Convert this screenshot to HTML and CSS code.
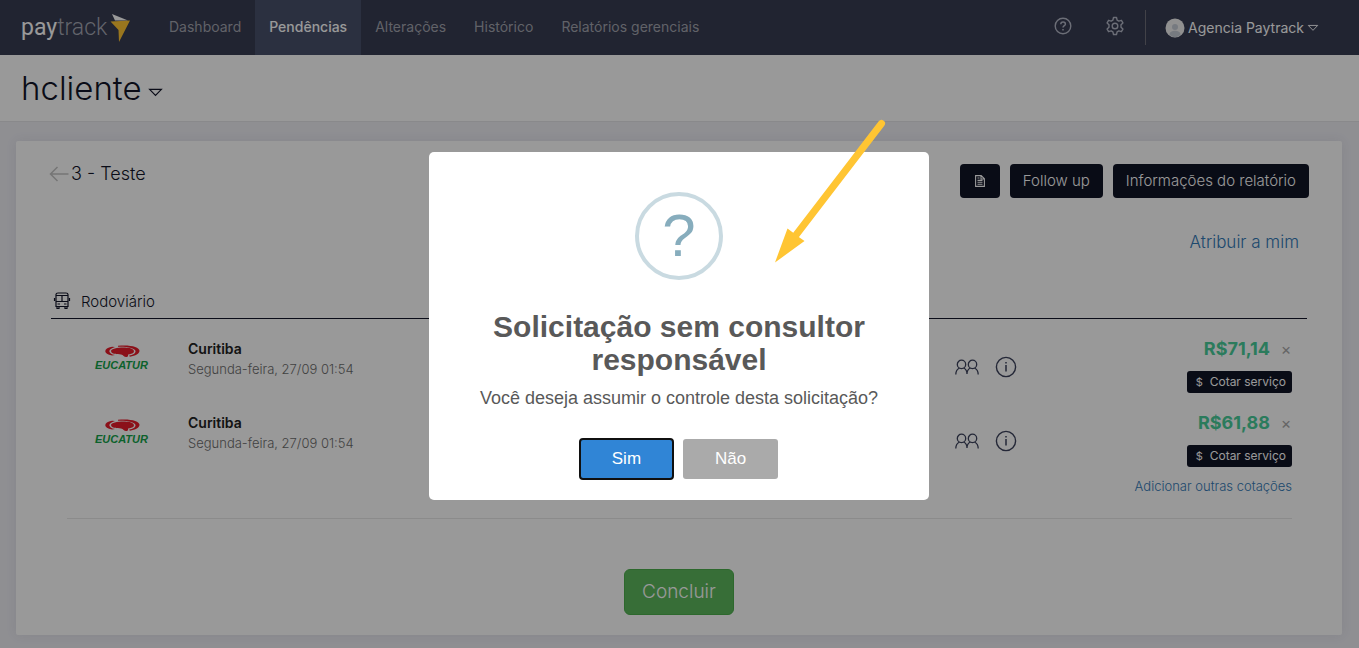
FILE: index.html
```html
<!DOCTYPE html>
<html lang="pt-BR">
<head>
<meta charset="utf-8">
<meta name="viewport" content="width=device-width, initial-scale=1">
<title>Paytrack - Pendências</title>
<link rel="stylesheet" href="styles.css">
</head>
<body>
<svg class="sprite" aria-hidden="true">
  <symbol id="people" viewBox="0 0 24 16">
    <g fill="none" stroke="currentColor" stroke-width="1.3">
      <circle cx="6.5" cy="5.4" r="4.2"/><circle cx="17.5" cy="5.4" r="4.2"/>
      <path d="M.8 15.500c0-3.500 1.500-5.500 3.700-6.500M8.500 9c2.200 1 3.500 3.200 3.500 6M12 15c0-2.800 1.300-5 3.500-6M19.500 9c2.200 1 3.700 3 3.700 6.500"/>
    </g>
  </symbol>
  <symbol id="info" viewBox="0 0 22 22">
    <circle cx="11" cy="11" r="9.600" fill="none" stroke="currentColor" stroke-width="1.400"/>
    <path d="M11 9v6.500M11 6v1.600" stroke="currentColor" stroke-width="1.500"/>
  </symbol>
  <symbol id="caret" viewBox="0 0 14 8">
    <path d="M1.500 1h11L7 6.700z" fill="none" stroke="currentColor" stroke-width="1.100"/>
  </symbol>
  <symbol id="eucatur" viewBox="0 0 58 28">
    <path d="M18 2.800C9 4.500 9 10 18 11.500l3-.4C13.500 9.300 13.500 5 21 2.900z" fill="#e81c2b"/>
    <path d="M24 1.700c12-1.200 21.500 1.100 21.500 5.100 0 3-4 5.200-9.500 5.900l-1-1c4-.7 6.500-2.300 6.500-4.400 0-3-7-4.800-17.500-4.600z" fill="#e81c2b"/>
    <path d="M17 7c0-4 20-5 22.500-1 1.500 2.600-1 4-5 4.300-1 1 .5 3-2.500 2.600-3-.4-2.500-2.200-5-2.500-4-.4-9.500.2-10-3.400z" fill="#e81c2b"/>
    <text class="eucatur-name" x="1" y="25">EUCATUR</text>
  </symbol>
</svg>

<header class="topbar">
  <a class="brand" href="#"><span>pay<span class="brand-track">track</span></span>
    <svg class="brand-mark" viewBox="0 0 21 30" aria-hidden="true"><path d="M2 1l16 6.500H5z" fill="#fff"/><path d="M.5 8.500L20 7.500 9 29 8.500 17z" fill="#ffc533"/></svg>
  </a>
  <nav class="menu">
    <a href="#">Dashboard</a>
    <a class="active" href="#">Pendências</a>
    <a href="#">Alterações</a>
    <a href="#">Histórico</a>
    <a href="#">Relatórios gerenciais</a>
  </nav>
  <div class="tools">
    <button class="icon-button" type="button" aria-label="Ajuda">
      <svg viewBox="0 0 18 18" width="18" height="18"><g fill="none" stroke="currentColor" stroke-width="1.400"><circle cx="9" cy="9" r="7.800"/><path d="M6.800 7.300c0-3 4.600-2.900 4.600-.1C11.400 8.700 9 8.700 9 10.500M9 11.900v1.500" stroke-width="1.500"/></g></svg>
    </button>
    <button class="icon-button" type="button" aria-label="Configurações">
      <svg viewBox="0 0 20 20" width="20" height="20"><g fill="none" stroke="currentColor" stroke-width="1.400" stroke-linejoin="round"><circle cx="10" cy="10" r="2.800"/><path d="M8.500 1.500h3l.6 2.600 1.700 1 2.600-.8 1.500 2.600-1.900 1.900v2.400l1.900 1.900-1.500 2.600-2.600-.8-1.700 1-.6 2.600h-3l-.6-2.600-1.700-1-2.600.8-1.500-2.600L4 11.200V8.800L2.100 6.900l1.500-2.600 2.600.8 1.700-1z"/></g></svg>
    </button>
    <button class="account" type="button">
      <svg viewBox="0 0 20 20" width="20" height="20" aria-hidden="true"><circle cx="10" cy="10" r="9.500" fill="#f1f1f1"/><circle cx="10" cy="9" r="3" fill="#c5ccd6"/><path d="M4.500 16.500c0-5 11-5 11 0-3 3.500-8 3.500-11 0z" fill="#c5ccd6"/></svg>
      <span>Agencia Paytrack</span>
      <svg class="caret-small" aria-hidden="true"><use href="#caret"/></svg>
    </button>
  </div>
</header>

<div class="client-bar">
  <h1>hcliente</h1>
  <svg class="caret-large" aria-hidden="true"><use href="#caret"/></svg>
</div>

<main class="card">
  <div class="card-head">
    <h2><a href="#" aria-label="Voltar"><svg viewBox="0 0 20 16" width="20" height="16"><path d="M19.500 8H2M8.500 1L1.500 8l7 7" fill="none" stroke="currentColor" stroke-width="1.500"/></svg></a>3 - Teste</h2>
    <div class="actions">
      <button class="dark-button file-button" type="button" aria-label="Documento">
        <svg viewBox="0 0 10 12" width="10" height="12"><path d="M.6.600h5.600l3.200 3.200v7.600H.6zM6 .6V4h3.400M2.500 3h2M2.500 5.400h5M2.500 7.300h5M2.500 9.200h5" fill="none" stroke="currentColor" stroke-width="1.100"/></svg>
      </button>
      <button class="dark-button" type="button">Follow up</button>
      <button class="dark-button" type="button">Informações do relatório</button>
    </div>
  </div>
  <div class="assign"><a href="#">Atribuir a mim</a></div>

  <section>
    <h3>
      <svg viewBox="0 0 18 17" width="18" height="17" aria-hidden="true"><g fill="none" stroke="currentColor" stroke-width="1.200"><path d="M3 14.500V2.500Q3 1 5 1h8q2 0 2 1.500v12zM3 3.500h12M3 9.500h12M9 3.500v6M1.500 6v3M16.500 6v3M4 14.500v2h2v-2M12 14.500v2h2v-2M4.500 12H7M11 12h2.500"/></g></svg>
      <span>Rodoviário</span>
    </h3>
    <div class="trips">
      <article class="trip">
        <svg class="company" role="img" aria-label="Eucatur"><use href="#eucatur"/></svg>
        <div class="route"><strong>Curitiba</strong><span>Segunda-feira, 27/09 01:54</span></div>
        <div class="trip-side">
          <div class="trip-icons">
            <button type="button" aria-label="Passageiros"><svg width="24" height="16"><use href="#people"/></svg></button>
            <button type="button" aria-label="Informações"><svg width="22" height="22"><use href="#info"/></svg></button>
          </div>
          <div class="quote">
            <div class="price"><b>R$71,14</b><button type="button" aria-label="Remover">×</button></div>
            <button class="dark-button small" type="button"><span class="dollar">$</span>Cotar serviço</button>
          </div>
        </div>
      </article>
      <article class="trip">
        <svg class="company" role="img" aria-label="Eucatur"><use href="#eucatur"/></svg>
        <div class="route"><strong>Curitiba</strong><span>Segunda-feira, 27/09 01:54</span></div>
        <div class="trip-side">
          <div class="trip-icons">
            <button type="button" aria-label="Passageiros"><svg width="24" height="16"><use href="#people"/></svg></button>
            <button type="button" aria-label="Informações"><svg width="22" height="22"><use href="#info"/></svg></button>
          </div>
          <div class="quote">
            <div class="price"><b>R$61,88</b><button type="button" aria-label="Remover">×</button></div>
            <button class="dark-button small" type="button"><span class="dollar">$</span>Cotar serviço</button>
          </div>
        </div>
      </article>
      <div class="more"><a href="#">Adicionar outras cotações</a></div>
    </div>
  </section>
  <div class="finish"><button type="button">Concluir</button></div>
</main>

<div class="overlay">
  <div class="modal" role="dialog" aria-modal="true" aria-labelledby="modal-title">
    <div class="modal-icon" aria-hidden="true">?</div>
    <h2 id="modal-title">Solicitação sem consultor responsável</h2>
    <p>Você deseja assumir o controle desta solicitação?</p>
    <div class="modal-actions">
      <button class="confirm" type="button">Sim</button>
      <button class="cancel" type="button">Não</button>
    </div>
    <svg class="pointer" viewBox="0 0 115 146" aria-hidden="true"><path d="M108.500 5.500L23 117" stroke="#ffc533" stroke-width="7" stroke-linecap="round"/><path d="M2 144.500L14.500 110.500l6 4.500 6 4.500 5 3.500z" fill="#ffc533"/></svg>
  </div>
</div>
</body>
</html>
```
FILE: styles.css
```css
* { box-sizing: border-box; }

body {
  margin: 0;
  min-height: 100vh;
  background: #eeeef4;
  color: #111428;
  font-family: Inter, "Open Sans", sans-serif;
  font-size: 13px;
  line-height: 20px;
}

h1, h2, h3, p { margin: 0; font-weight: 300; }
a { color: #337ab7; text-decoration: none; }
button { padding: 0; border: 0; background: none; color: inherit; font: inherit; cursor: pointer; }
svg { display: block; flex: none; }
.sprite { position: absolute; width: 0; height: 0; }

.topbar { display: flex; height: 55px; background: #373c53; }
.brand {
  display: flex;
  align-items: center;
  width: 155px;
  padding-left: 21px;
  color: #fff;
  font-family: Roboto, sans-serif;
  font-size: 23px;
  line-height: 32px;
}
.brand-track { color: #a5a8b3; font-weight: 300; }
.brand-mark { width: 21px; height: 30px; margin-left: 3px; }
.menu { display: flex; }
.menu a { display: flex; align-items: center; padding: 0 14px 2px; color: #a2a4ad; font-size: 14px; }
.menu .active { background: #48506b; color: #fff; font-weight: 500; }
.tools { display: flex; align-items: center; margin-left: auto; padding-right: 40px; }
.icon-button { display: flex; justify-content: center; width: 52px; padding-bottom: 3px; color: #b4b8c6; }
.account {
  display: flex;
  align-items: center;
  gap: 3px;
  height: 35px;
  margin-left: 4px;
  padding-left: 19px;
  border-left: 1px solid #6e6e78;
  color: #fff;
  font-size: 14px;
}
.caret-small { width: 12px; height: 8px; }

.client-bar {
  display: flex;
  align-items: center;
  gap: 6px;
  height: 67px;
  padding: 0 21px;
  border-bottom: 1px solid #e4e4e8;
  background: #fff;
}
.client-bar h1 { font-size: 33px; line-height: 40px; }
.caret-large { width: 15px; height: 9px; margin-top: 8px; }

.card {
  margin: 19px 17px 13px 16px;
  padding: 23px 33px 20px;
  border-radius: 2px;
  background: #fff;
  box-shadow: 0 0 12px rgba(40, 40, 80, .08);
}
.card-head { display: flex; justify-content: space-between; align-items: flex-start; }
.card-head h2 { display: flex; align-items: center; gap: 2px; font-size: 18px; }
.card-head h2 a { color: #c4c4c4; }
.actions { display: flex; gap: 10px; }
.dark-button {
  display: flex;
  align-items: center;
  justify-content: center;
  height: 34px;
  padding: 0 13px;
  border-radius: 4px;
  background: #101426;
  color: #fff;
  font-size: 15px;
  font-weight: 300;
}
.file-button { width: 40px; }
.assign { padding: 34px 10px 0; font-size: 17px; font-weight: 300; text-align: right; }

section { margin: 0 2px; }
h3 {
  display: flex;
  align-items: flex-start;
  gap: 10px;
  margin-top: 40px;
  padding: 0 2px 6px;
  border-bottom: 1px solid #111428;
  font-size: 15px;
}
.trips { margin: 0 15px 0 16px; border-bottom: 1px solid #e8e8e8; }
.trip { display: grid; grid-template-columns: 121px 1fr 337px; height: 74px; padding-top: 20px; }
.company { width: 58px; height: 28px; margin: 5px 0 0 27px; }
.eucatur-name { fill: #14a34a; font: italic 700 11px "Liberation Sans", Arial, sans-serif; }
.route { display: flex; flex-direction: column; color: #6d6d6d; }
.route strong { color: #222; font-size: 14px; font-weight: 600; }
.route span { font-weight: 300; }
.trip-side { display: flex; justify-content: space-between; align-items: flex-start; }
.trip-icons { display: flex; align-items: center; gap: 16px; margin-top: 17px; color: #3c425c; }
.quote { display: flex; flex-direction: column; align-items: flex-end; gap: 12px; }
.price { display: flex; align-items: center; gap: 10px; }
.price b { color: #48cd9a; font-size: 18px; font-weight: 700; }
.price button { width: 12px; color: #a8a8a8; font-size: 16px; }
.small { height: 22px; padding: 0 6px; border-radius: 3px; font-size: 12px; font-weight: 400; }
.dollar { width: 17px; padding-left: 3px; font-size: 11px; text-align: left; }
.more { padding: 9px 0 22px; text-align: right; font-weight: 300; }

.finish { display: flex; justify-content: center; margin-top: 50px; }
.finish button {
  height: 46px;
  padding: 0 17px;
  border: 1px solid #4cae4c;
  border-radius: 6px;
  background: #5cb85c;
  color: #fff;
  font-size: 19px;
  font-weight: 300;
}

.overlay {
  position: fixed;
  inset: 0;
  display: flex;
  align-items: center;
  justify-content: center;
  padding: 14px 11px 10px 10px;
  background: rgba(0, 0, 0, .4);
}
.modal {
  position: relative;
  width: 500px;
  max-width: 100%;
  padding: 40px 20px 21px;
  border-radius: 5px;
  background: #fff;
  color: #595959;
  font-family: "Liberation Sans", Arial, sans-serif;
  text-align: center;
}
.modal-icon {
  width: 88px;
  height: 88px;
  margin: 0 auto 30px;
  border: 4px solid #c9dae1;
  border-radius: 50%;
  color: #87adbd;
  font-size: 60px;
  line-height: 80px;
}
.modal h2 { font-size: 30px; font-weight: 700; line-height: 33px; }
.modal p { margin-top: 12px; font-size: 18px; font-weight: 400; line-height: 20px; }
.modal-actions { display: flex; justify-content: center; gap: 10px; margin-top: 31px; }
.modal-actions button {
  height: 40px;
  padding: 0 32px;
  border-radius: 3px;
  color: #fff;
  font-size: 17px;
}
.modal-actions .confirm { outline: 2px solid #101010; outline-offset: -1px; background: #3085d6; }
.modal-actions .cancel { background: #aaa; }
.pointer { position: absolute; top: -34px; left: 344px; width: 115px; height: 146px; }
```
